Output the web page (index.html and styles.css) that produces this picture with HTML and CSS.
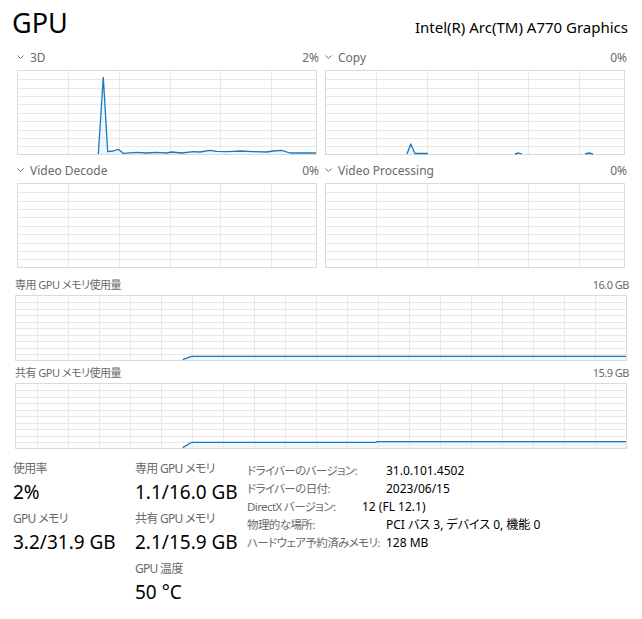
FILE: index.html
```html
<!DOCTYPE html>
<html lang="ja">
<head>
<meta charset="utf-8">
<title>GPU</title>
<link rel="stylesheet" href="styles.css">
</head>
<body>
<svg class="defs" width="0" height="0" aria-hidden="true">
  <defs>
    <symbol id="grid-engine" viewBox="0 0 300 85">
      <path d="M51.5 1V84M102.5 1V84M153.5 1V84M203.5 1V84M254.5 1V84M1 9.5H299M1 18.5H299M1 26.5H299M1 34.5H299M1 43.5H299M1 51.5H299M1 60.5H299M1 68.5H299M1 76.5H299" stroke="#e8e8e8" fill="none"/>
      <rect x="0.5" y="0.5" width="299" height="84" fill="none" stroke="#dadada"/>
    </symbol>
    <symbol id="grid-mem" viewBox="0 0 612 66">
      <path d="M22.5 1V65M53.5 1V65M84.5 1V65M115.5 1V65M146.5 1V65M177.5 1V65M208.5 1V65M239.5 1V65M270.5 1V65M301.5 1V65M332.5 1V65M363.5 1V65M394.5 1V65M425.5 1V65M456.5 1V65M487.5 1V65M518.5 1V65M549.5 1V65M580.5 1V65M1 7.5H611M1 14.5H611M1 20.5H611M1 27.5H611M1 33.5H611M1 40.5H611M1 46.5H611M1 53.5H611M1 59.5H611" stroke="#e8e8e8" fill="none"/>
      <rect x="0.5" y="0.5" width="611" height="65" fill="none" stroke="#dadada"/>
    </symbol>
    <symbol id="chev" viewBox="0 0 7 4">
      <path d="M0.5 0.5L3.5 3.5L6.5 0.5" fill="none" stroke="#707070" stroke-width="1"/>
    </symbol>
  </defs>
</svg>

<div class="page">
  <header class="head">
    <h1 class="title">GPU</h1>
    <div class="model">Intel(R) Arc(TM) A770 Graphics</div>
  </header>

  <section class="engines">
    <div class="engine">
      <div class="engine-head">
        <svg class="chev" width="7" height="4"><use href="#chev"/></svg>
        <span class="engine-name">3D</span>
        <span class="engine-pct">2%</span>
      </div>
      <svg class="chart" width="300" height="85" viewBox="0 0 300 85">
        <path class="area" d="M81.3 84L86.3 7.3L90.7 81.7L96.3 81L101.3 79.3L106.3 83.3L119.7 82.3L129.7 83L139.7 82.3L149.7 83L154.7 82L164.7 83L176.3 81.7L183 82L193 80.3L199.7 81.3L209.7 81.7L216.3 81.3L223 81L236.3 81.7L249.7 82L256.3 81L264.7 80.3L273 83L299 83V84H81.3Z"/>
        <use href="#grid-engine" width="300" height="85"/>
        <path class="line" d="M81.3 84L86.3 7.3L90.7 81.7L96.3 81L101.3 79.3L106.3 83.3L119.7 82.3L129.7 83L139.7 82.3L149.7 83L154.7 82L164.7 83L176.3 81.7L183 82L193 80.3L199.7 81.3L209.7 81.7L216.3 81.3L223 81L236.3 81.7L249.7 82L256.3 81L264.7 80.3L273 83L299 83"/>
      </svg>
    </div>

    <div class="engine">
      <div class="engine-head">
        <svg class="chev" width="7" height="4"><use href="#chev"/></svg>
        <span class="engine-name">Copy</span>
        <span class="engine-pct">0%</span>
      </div>
      <svg class="chart" width="300" height="85" viewBox="0 0 300 85">
        <path class="area" d="M82 84L85.7 74L90 83.5L103 83.5V84Z"/>
        <use href="#grid-engine" width="300" height="85"/>
        <path class="line" d="M82 84L85.7 74L90 83.5L103 83.5M190 84L193.7 83L197 84M260 84L264 83L268 84"/>
      </svg>
    </div>

    <div class="engine">
      <div class="engine-head">
        <svg class="chev" width="7" height="4"><use href="#chev"/></svg>
        <span class="engine-name">Video Decode</span>
        <span class="engine-pct">0%</span>
      </div>
      <svg class="chart" width="300" height="85" viewBox="0 0 300 85">
        <use href="#grid-engine" width="300" height="85"/>
      </svg>
    </div>

    <div class="engine">
      <div class="engine-head">
        <svg class="chev" width="7" height="4"><use href="#chev"/></svg>
        <span class="engine-name">Video Processing</span>
        <span class="engine-pct">0%</span>
      </div>
      <svg class="chart" width="300" height="85" viewBox="0 0 300 85">
        <use href="#grid-engine" width="300" height="85"/>
      </svg>
    </div>
  </section>

  <section class="memory">
    <div class="mem-block">
      <div class="mem-head">
        <span>専用 GPU メモリ使用量</span>
        <span>16.0 GB</span>
      </div>
      <svg class="chart" width="612" height="66" viewBox="0 0 612 66">
        <path class="area" d="M167.7 65L176.7 61.3H611V65Z"/>
        <use href="#grid-mem" width="612" height="66"/>
        <path class="line" d="M167.7 64.6L176.7 61.3H611"/>
      </svg>
    </div>
    <div class="mem-block">
      <div class="mem-head">
        <span>共有 GPU メモリ使用量</span>
        <span>15.9 GB</span>
      </div>
      <svg class="chart" width="612" height="66" viewBox="0 0 612 66">
        <path class="area" d="M167.7 65L176.7 59.3H361L362 58.6H611V65Z"/>
        <use href="#grid-mem" width="612" height="66"/>
        <path class="line" d="M167.7 64.6L176.7 59.3H361L362 58.6H611"/>
      </svg>
    </div>
  </section>

  <section class="stats">
    <div class="stat-col">
      <div class="stat">
        <div class="stat-label">使用率</div>
        <div class="stat-value">2%</div>
      </div>
      <div class="stat">
        <div class="stat-label">GPU メモリ</div>
        <div class="stat-value">3.2/31.9 GB</div>
      </div>
    </div>
    <div class="stat-col">
      <div class="stat">
        <div class="stat-label">専用 GPU メモリ</div>
        <div class="stat-value">1.1/16.0 GB</div>
      </div>
      <div class="stat">
        <div class="stat-label">共有 GPU メモリ</div>
        <div class="stat-value">2.1/15.9 GB</div>
      </div>
      <div class="stat">
        <div class="stat-label">GPU 温度</div>
        <div class="stat-value">50 °C</div>
      </div>
    </div>
    <dl class="info">
      <dt>ドライバーのバージョン:</dt><dd>31.0.101.4502</dd>
      <dt>ドライバーの日付:</dt><dd>2023/06/15</dd>
      <dt>DirectX バージョン:</dt><dd class="info-shift">12 (FL 12.1)</dd>
      <dt>物理的な場所:</dt><dd>PCI バス 3, デバイス 0, 機能 0</dd>
      <dt>ハードウェア予約済みメモリ:</dt><dd>128 MB</dd>
    </dl>
  </section>
</div>
</body>
</html>
```

FILE: styles.css
```css
* {
  box-sizing: border-box;
}

html, body {
  margin: 0;
  padding: 0;
  background: #ffffff;
}

body {
  font-family: "Noto Sans", "Noto Sans CJK JP", sans-serif;
  font-feature-settings: "palt";
  color: #000000;
}

.defs {
  position: absolute;
  width: 0;
  height: 0;
  overflow: hidden;
}

.page {
  width: 642px;
  height: 619px;
  overflow: hidden;
}

/* header */
.head {
  display: flex;
  justify-content: space-between;
  align-items: baseline;
  padding: 7px 14px 0 12px;
  height: 49px;
}

.title {
  margin: 0;
  font-size: 27px;
  font-weight: 400;
  line-height: 32px;
  color: #000;
}

.model {
  font-size: 15px;
  color: #000;
}

/* engine charts */
.engines {
  display: grid;
  grid-template-columns: 300px 300px;
  column-gap: 8px;
  row-gap: 7px;
  padding-left: 17px;
}

.engine {
  display: flex;
  flex-direction: column;
  gap: 5px;
}

.engine-head {
  display: flex;
  align-items: center;
  height: 16px;
  font-size: 12px;
  color: #6a6a6a;
  margin-right: -2px;
}

.chev {
  display: block;
  margin-right: 6px;
}

.engine-name {
  flex: 1;
}

.chart {
  display: block;
}

.area {
  fill: #f1f6fa;
  stroke: none;
}

.line {
  fill: none;
  stroke: #1879c0;
  stroke-width: 1.3;
  stroke-linejoin: round;
}

/* memory charts */
.memory {
  display: flex;
  flex-direction: column;
  gap: 4px;
  padding: 9px 0 0 15px;
}

.mem-block {
  display: flex;
  flex-direction: column;
  gap: 2px;
  width: 612px;
}

.mem-head {
  display: flex;
  justify-content: space-between;
  height: 16px;
  line-height: 16px;
  font-size: 11px;
  letter-spacing: -0.5px;
  color: #6a6a6a;
  margin-right: -2px;
  white-space: nowrap;
}

/* statistics */
.stats {
  display: grid;
  grid-template-columns: 122px 112px auto;
  padding: 12px 0 0 13px;
}

.stat-col {
  display: flex;
  flex-direction: column;
}

.stat {
  display: flex;
  flex-direction: column;
  gap: 2px;
  height: 50px;
}

.stat-label {
  font-size: 12px;
  line-height: 16px;
  letter-spacing: -0.7px;
  color: #6a6a6a;
  white-space: nowrap;
}

.stat-value {
  font-size: 19px;
  line-height: 26px;
  color: #000;
  white-space: nowrap;
}

.info {
  display: grid;
  grid-template-columns: 139px auto;
  grid-auto-rows: 18px;
  align-items: center;
  margin: 0;
  font-size: 12px;
  white-space: nowrap;
}

.info dt {
  font-size: 11.5px;
  letter-spacing: -0.6px;
  color: #6a6a6a;
  margin: 0;
}

.info dd {
  margin: 0;
  color: #000;
}

.info .info-shift {
  margin-left: -24px;
}
```
